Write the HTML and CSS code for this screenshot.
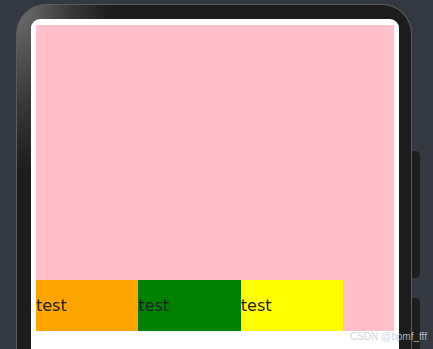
FILE: index.html
```html
<!DOCTYPE html>
<html lang="en">
<head>
    <meta charset="UTF-8">
    <meta name="viewport" content="width=device-width, initial-scale=1.0">
    <title>Row demo</title>
    <link rel="stylesheet" href="styles.css">
</head>
<body>
    <div class="stage">
        <div class="device">
            <div class="screen">
                <div class="page">
                    <div class="row">
                        <div class="item orange">test</div>
                        <div class="item green">test</div>
                        <div class="item yellow">test</div>
                    </div>
                </div>
            </div>
        </div>
        <div class="side-keys">
            <div class="key key-long"></div>
            <div class="key key-short"></div>
        </div>
    </div>
    <div class="watermark">CSDN @bpmf_fff</div>
</body>
</html>
```

FILE: styles.css
```css
body {
    margin: 0;
    height: 349px;
    overflow: hidden;
    background-color: #343841;
    font-family: "DejaVu Sans", sans-serif;
    position: relative;
}
.stage {
    display: flex;
    padding: 4px 0 0 16px;
}
.device {
    width: 396px;
    height: 345px;
    box-sizing: border-box;
    padding: 14px 12px 0 14px;
    border: 1px solid #5c5c5c;
    border-bottom: none;
    border-radius: 30px 30px 0 0;
    background-color: #1c1c1c;
    background-image: radial-gradient(ellipse 95px 170px at 0 0, #707070 0%, #3a3a3a 55%, #1c1c1c 100%);
}
.screen {
    height: 100%;
    padding: 6px 5px 0 5px;
    background-color: white;
    border-radius: 9px 9px 0 0;
}
.page {
    height: 306px;
    background-color: pink;
    display: flex;
    flex-direction: column;
    justify-content: flex-end;
}
.row {
    display: flex;
    height: 51px;
}
.item {
    width: 102.4px;
    display: flex;
    align-items: center;
    font-size: 16px;
    color: #222;
}
.orange {
    background-color: orange;
}
.green {
    background-color: green;
}
.yellow {
    background-color: yellow;
}
.side-keys {
    display: flex;
    flex-direction: column;
    gap: 20px;
    padding-top: 147px;
}
.key {
    width: 8px;
    background-color: #1e1e1e;
    border-radius: 0 5px 5px 0;
}
.key-long {
    height: 127px;
}
.key-short {
    height: 51px;
    border-radius: 0 5px 0 0;
}
.watermark {
    position: absolute;
    right: 6px;
    bottom: 7px;
    font-family: "Liberation Sans", sans-serif;
    font-size: 10px;
    color: rgba(205, 205, 205, 0.85);
}
```
